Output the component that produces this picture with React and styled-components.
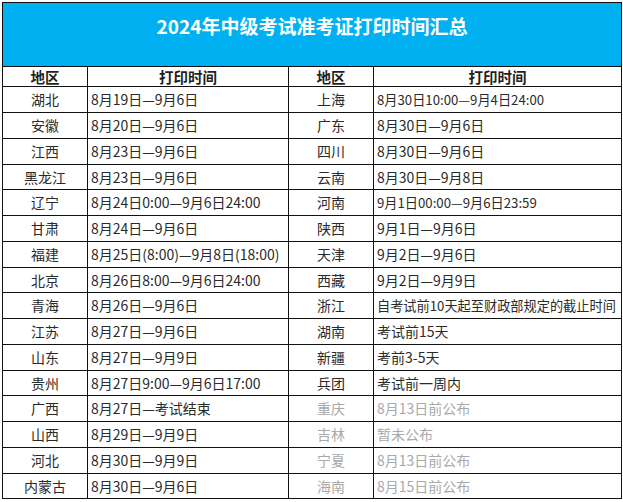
import React from 'react';
import styled, { createGlobalStyle } from 'styled-components';

const GlobalStyle = createGlobalStyle`
  html, body {
    margin: 0;
    padding: 0;
    background: #ffffff;
  }
  body {
    font-family: "Noto Sans CJK SC", "Noto Sans", sans-serif;
  }
`;

const Wrapper = styled.div`
  padding: 2px 0 0 2px;
`;

const Table = styled.table`
  width: 619px;
  border-collapse: collapse;
  table-layout: fixed;
  color: #1f1f1f;
`;

const TitleCell = styled.td`
  height: 64px;
  padding: 10px 0 0;
  box-sizing: border-box;
  vertical-align: top;
  text-align: center;
  background: #00b0f0;
  color: #ffffff;
  font-size: 19px;
  font-weight: 700;
  line-height: 26px;
  border: 1px solid #111;
`;

const HeadRow = styled.tr`
  height: 20px;
`;

const HeadCell = styled.th`
  padding: 0;
  font-size: 14.5px;
  font-weight: 700;
  line-height: 17px;
  text-align: center;
  border: 1px solid #111;
`;

const Row = styled.tr`
  height: ${p => p.$h}px;
`;

const AreaCell = styled.td`
  padding: 0;
  text-align: center;
  font-size: 14px;
  line-height: 17px;
  color: ${p => (p.$muted ? '#a9a9a9' : '#2a2a2a')};
  border: 1px solid #111;
`;

const TimeCell = styled.td`
  padding: 0 0 0 3px;
  text-align: left;
  font-size: ${p => (p.$tight ? '13.2px' : '14px')};
  line-height: 17px;
  white-space: nowrap;
  color: ${p => (p.$muted ? '#a9a9a9' : '#2a2a2a')};
  border: 1px solid #111;
`;

const rows = [
  ['湖北', '8月19日—9月6日', '上海', '8月30日10:00—9月4日24:00'],
  ['安徽', '8月20日—9月6日', '广东', '8月30日—9月6日'],
  ['江西', '8月23日—9月6日', '四川', '8月30日—9月6日'],
  ['黑龙江', '8月23日—9月6日', '云南', '8月30日—9月8日'],
  ['辽宁', '8月24日0:00—9月6日24:00', '河南', '9月1日00:00—9月6日23:59'],
  ['甘肃', '8月24日—9月6日', '陕西', '9月1日—9月6日'],
  ['福建', '8月25日(8:00)—9月8日(18:00)', '天津', '9月2日—9月6日'],
  ['北京', '8月26日8:00—9月6日24:00', '西藏', '9月2日—9月9日'],
  ['青海', '8月26日—9月6日', '浙江', '自考试前10天起至财政部规定的截止时间'],
  ['江苏', '8月27日—9月6日', '湖南', '考试前15天'],
  ['山东', '8月27日—9月9日', '新疆', '考前3-5天'],
  ['贵州', '8月27日9:00—9月6日17:00', '兵团', '考试前一周内'],
  ['广西', '8月27日—考试结束', '重庆', '8月13日前公布', true],
  ['山西', '8月29日—9月9日', '吉林', '暂未公布', true],
  ['河北', '8月30日—9月9日', '宁夏', '8月13日前公布', true],
  ['内蒙古', '8月30日—9月6日', '海南', '8月15日前公布', true],
];

export default function App() {
  return (
    <Wrapper>
      <GlobalStyle />
      <Table>
        <colgroup>
          <col style={{ width: 85 }} />
          <col style={{ width: 201 }} />
          <col style={{ width: 85 }} />
          <col style={{ width: 248 }} />
        </colgroup>
        <tbody>
          <tr>
            <TitleCell colSpan={4}>2024年中级考试准考证打印时间汇总</TitleCell>
          </tr>
          <HeadRow>
            <HeadCell>地区</HeadCell>
            <HeadCell>打印时间</HeadCell>
            <HeadCell>地区</HeadCell>
            <HeadCell>打印时间</HeadCell>
          </HeadRow>
          {rows.map(([a1, t1, a2, t2, muted], i) => (
            <Row key={a1} $h={i % 4 === 3 ? 25 : 26}>
              <AreaCell>{a1}</AreaCell>
              <TimeCell>{t1}</TimeCell>
              <AreaCell $muted={muted}>{a2}</AreaCell>
              <TimeCell $muted={muted} $tight={t2.length > 16}>{t2}</TimeCell>
            </Row>
          ))}
        </tbody>
      </Table>
    </Wrapper>
  );
}
